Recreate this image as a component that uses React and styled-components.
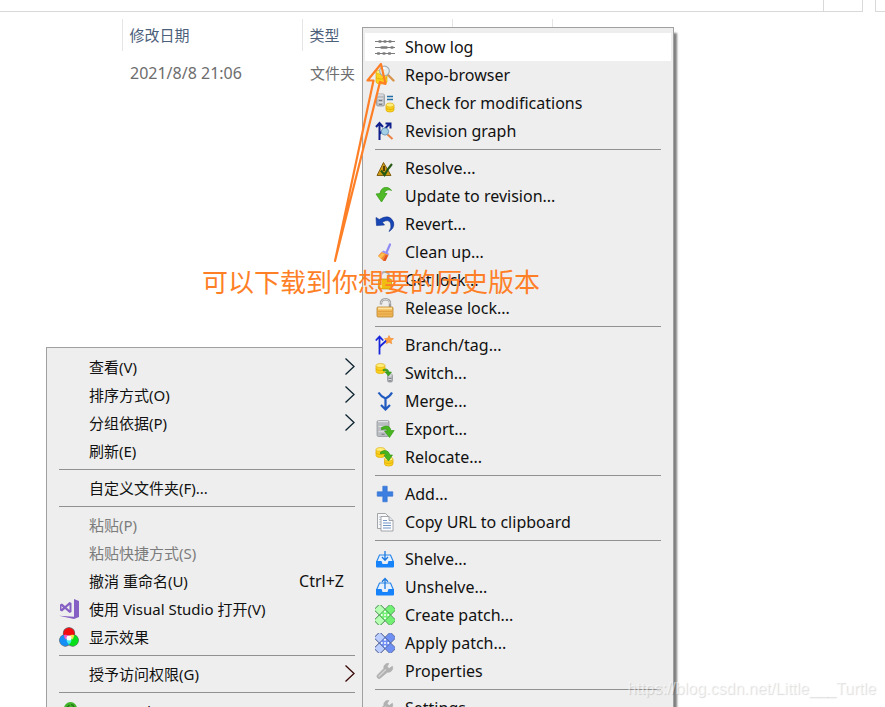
import React from "react";
import styled, { createGlobalStyle } from "styled-components";

const Global = createGlobalStyle`
  * { box-sizing: border-box; }
  body {
    margin: 0;
    background: #fff;
    color: #111;
    font-family: "Noto Sans", "Noto Sans CJK SC", sans-serif;
    font-size: 15px;
  }
`;

const Window = styled.main`
  position: relative;
  height: 100vh;
  overflow: hidden;
`;

const AddressStrip = styled.header`
  display: flex;
  justify-content: flex-end;
  gap: 12px;
  height: 12px;
`;

const AddressBox = styled.div`
  flex: 1;
  display: flex;
  justify-content: flex-end;
  border: solid #d9d9d9;
  border-width: 0 1px 1px 0;
`;

const RefreshBox = styled.div`
  width: 39px;
  border-left: 1px solid #d9d9d9;
`;

const SearchBox = styled.div`
  width: 10px;
  border: solid #d9d9d9;
  border-width: 0 0 1px 1px;
`;

const FileTable = styled.table`
  width: 100%;
  margin-top: 7px;
  border-collapse: collapse;
  table-layout: fixed;
`;

const Col = styled.col`
  width: ${(p) => p.$w};
`;

const HeadCell = styled.th`
  height: 32px;
  padding: 0 0 0 7px;
  border-left: ${(p) => (p.$first ? "0" : "1px solid #e5e5e5")};
  color: #4c607a;
  font-weight: 400;
  line-height: 20px;
  text-align: left;
`;

const Cell = styled.td`
  height: 44px;
  padding: 0 0 0 8px;
  color: #6d6d6d;
  font-size: ${(p) => (p.$latin ? "16px" : "15px")};
  line-height: 20px;
`;

const MenuPanel = styled.div`
  position: absolute;
  left: ${(p) => p.$left}px;
  top: ${(p) => p.$top}px;
  width: ${(p) => p.$width}px;
  padding: 5px 2px;
  border: 1px solid #a0a0a0;
  background: #eee;
  font-size: ${(p) => (p.$latin ? "16px" : "15px")};
  box-shadow: 3px 6px 2px rgba(0, 0, 0, 0.5);
`;

const Item = styled.button`
  display: flex;
  align-items: center;
  gap: 10px;
  width: 100%;
  height: 28px;
  padding: 0 10px;
  border: 0;
  background: ${(p) => (p.$active ? "#fff" : "transparent")};
  color: ${(p) => (p.disabled ? "#7c7c7c" : "#111")};
  font: inherit;
  line-height: 20px;
  text-align: left;
  white-space: nowrap;
`;

const Label = styled.span`
  flex: 1;
`;

const Shortcut = styled.span`
  padding-right: 11px;
  font-size: 16px;
`;

const Separator = styled.hr`
  height: 1px;
  margin: 4px 10px;
  border: 0;
  background: #919191;
`;

const IconBox = styled.svg`
  flex: none;
  width: 20px;
  height: 20px;
`;

const ChevronSvg = styled.svg`
  flex: none;
  width: 10px;
  height: 20px;
`;

const Note = styled.p`
  position: absolute;
  left: 202px;
  top: 263px;
  margin: 0;
  color: #ff7f27;
  font-family: "Noto Sans CJK SC", sans-serif;
  font-size: 26px;
  line-height: 36px;
  white-space: nowrap;
`;

const NoteArrow = styled.svg`
  position: absolute;
  left: 330px;
  top: 60px;
  width: 60px;
  height: 206px;
`;

const Watermark = styled.p`
  position: absolute;
  right: 9px;
  bottom: 8px;
  margin: 0;
  color: rgba(255, 255, 255, 0.55);
  font-family: "Liberation Sans", sans-serif;
  font-size: 16px;
  line-height: 20px;
  text-shadow: 1px 1px 1px rgba(0, 0, 0, 0.14);
`;

const Cylinder = ({ x, y, w = 9, h = 10, body = "#fbd21c", top = "#ffee7a", edge = "#dca90a" }) => (
  <g>
    <path d={`M${x} ${y + 2}v${h - 4}q0 2 ${w / 2} 2t${w / 2}-2v${4 - h}z`} fill={body} stroke={edge} strokeWidth=".7" />
    <path d={`M${x} ${y + h / 2}q0 2 ${w / 2} 2t${w / 2}-2`} fill="none" stroke={edge} strokeWidth=".8" />
    <ellipse cx={x + w / 2} cy={y + 2} rx={w / 2} ry="2" fill={top} stroke={edge} strokeWidth=".6" />
  </g>
);

const Cabinet = ({ x, y, w, h }) => (
  <g>
    <rect x={x} y={y} width={w} height={h} rx="1.5" fill="#b9bcc0" stroke="#92969a" strokeWidth=".8" />
    <path d={`M${x + 1} ${y + 1}h${w - 2}`} stroke="#e0e3e8" strokeWidth="1.4" />
    <path
      d={`M${x + 1.5} ${y + h * 0.38}h${w - 3}M${x + 1.5} ${y + h * 0.7}h${w - 3}`}
      stroke="#dfe0e2"
      strokeWidth="1"
    />
    <path d={`M${x + w / 2 - 1.5} ${y + h * 0.54}h3M${x + w / 2 - 1.5} ${y + h * 0.86}h3`} stroke="#74787c" />
  </g>
);

const Patch = ({ light, dark, edge }) => (
  <g strokeWidth=".8" stroke={edge}>
    <g transform="rotate(-45 10 10)">
      <rect x="-1.500" y="6" width="23" height="8" rx="1" fill={dark} />
      <rect x="-1.500" y="6" width="9" height="8" rx="1" fill={light} />
    </g>
    <g transform="rotate(45 10 10)">
      <rect x="-1.500" y="6" width="23" height="8" rx="1" fill={dark} />
      <rect x="-1.500" y="6" width="8" height="8" rx="1" fill={light} />
      <rect x="6" y="6" width="8" height="8" fill={dark} strokeWidth=".6" />
    </g>
    <g fill="#fff" stroke="none">
      <circle cx="10" cy="6.800" r="1" />
      <circle cx="13.200" cy="10" r="1" />
      <circle cx="10" cy="13.200" r="1" />
      <circle cx="6.800" cy="10" r="1" />
      <circle cx="10" cy="10" r="1" />
    </g>
  </g>
);

const Wrench = () => (
  <g>
    <path
      d="M17.4 5.3 14.2 7.5 12 5.8l1.8-3.3C10.800 1.900 8.300 4.500 8.900 7.500L2.500 14c-1.600 1.800.9 4.700 2.900 3l6.900-5.800c3.600.6 6.300-2.600 5.100-5.900z"
      fill="#b2b2b2"
      stroke="#a5a5a5"
      strokeWidth=".6"
    />
    <path d="m4 15.300 6.500-6.500" stroke="#d2d2d2" strokeWidth="1.400" strokeLinecap="round" />
  </g>
);

const Tray = () => (
  <g>
    <path d="M1.500 13 4.500 6h11l3 7" fill="#e6f1fd" stroke="#2b88ea" strokeWidth="1.200" />
    <path d="M1 12h5.500l1 3h5l1-3H19v5.500q0 1-1 1H2q-1 0-1-1z" fill="#1683fb" />
  </g>
);

const icons = {
  log: (
    <g stroke="#7b7b7b" fill="#7b7b7b">
      <path d="M0 4.500h20M0 10.500h20M0 16.500h20" strokeWidth="1" />
      <path d="M4.500 4.500h1M9.500 4.500h1M14.500 4.500h1M6.500 10.500h5M16.500 10.500h1M3 16.500h1M8.500 16.500h1M14 16.500h1" strokeWidth="2.400" strokeLinecap="round" />
    </g>
  ),
  repo: (
    <g>
      <Cylinder x={1} y={5} w={11} h={14} />
      <path d="m13 10 5.500 5.500" stroke="#d8954d" strokeWidth="2.400" strokeLinecap="round" />
      <circle cx="9.500" cy="6" r="4.800" fill="#e2eff6" fillOpacity=".9" stroke="#a3acb4" strokeWidth="1.200" />
      <path d="M6.500 6q.5-3 3.500-3" stroke="#fff" fill="none" strokeWidth="1.400" />
    </g>
  ),
  check: (
    <g>
      <Cabinet x={1.5} y={1} w={8} h={12} />
      <path d="M12 3.500h6M12 6.500h6" stroke="#216da5" strokeWidth="1.700" />
      <Cylinder x={11} y={10} w={8} h={9} />
    </g>
  ),
  graph: (
    <g fill="none" stroke="#10218d" strokeWidth="2">
      <path d="M4.500 19V2M1 6l3.500-4L8 6M4.500 13l10-10M10.500 2.500h5v5" />
      <path d="m12 13 5.500 5" stroke="#e98245" strokeWidth="2" />
      <circle cx="10" cy="10.500" r="3.600" fill="#a5cfe6" stroke="#6f9cbc" strokeWidth="1" />
    </g>
  ),
  resolve: (
    <g>
      <path d="M8.500 4.500 16 17.500H2z" fill="#d09a12" stroke="#806016" strokeLinejoin="round" />
      <path d="M9 8v5M9 14.500v1.500" stroke="#3a2b08" strokeWidth="1.600" />
      <path d="m6 12.500 3.500 4.500q3-6 7.500-11" fill="none" stroke="#275b15" strokeWidth="2.200" />
    </g>
  ),
  update: (
    <path
      d="M16.500 4.500C14 0 6 0 5 7.500L1 8l5.500 8 5.500-8.500H9.500c.4-3.300 4.500-4.500 7-3z"
      fill="#4fb928"
      stroke="#3b9e1c"
      strokeWidth=".8"
      strokeLinejoin="round"
    />
  ),
  revert: (
    <path
      d="M1 3.500 1.500 11.500 9.500 11 7.300 8.300q6-3.800 8.200.7 1.500 4.500-1.500 8.500Q20 14 18.500 8 14.500-.8 4.300 5.400z"
      fill="#1645b5"
      stroke="#0c2e8d"
      strokeWidth=".6"
    />
  ),
  clean: (
    <g>
      <path d="m15 2.500-3.500 8" stroke="#8f8bf5" strokeWidth="2.200" strokeLinecap="round" />
      <path d="m8.500 8.500 5 2.500.5 2.500-7.500-3.500z" fill="#9a92f5" />
      <path d="M6.500 10 3 14l5.500 5h2l3-6z" fill="#f58b36" />
      <path d="m7 11-3.500 3.500 2.500 2L10 12z" fill="#fbc04d" />
      <path d="m8 18.500 3-5.500 2 .5-2.500 5.500z" fill="#e05428" />
    </g>
  ),
  lock: (
    <g>
      <path d="M6 11V6q0-4 4-4t4 4v5" fill="none" stroke="#b1b1b1" strokeWidth="2" />
      <rect x="3.500" y="9" width="13" height="10" rx="1" fill="#f0bd12" stroke="#c99206" strokeWidth=".7" />
      <path d="M6 10v8" stroke="#ffe16a" strokeWidth="2" />
    </g>
  ),
  unlock: (
    <g>
      <path d="M6 6.500Q5.500 1.300 10.500 1.300t4.500 5V10" fill="none" stroke="#9c9c9c" strokeWidth="2.400" />
      <path d="M6 5.500q.5-4.200 4.500-4.200 4 0 4.500 4.500" fill="none" stroke="#dcdcdc" strokeWidth="1" />
      <rect x="2" y="9" width="16" height="10" rx="1" fill="#f0b656" stroke="#b9832d" strokeWidth=".8" />
      <path d="M3 10.500h14" stroke="#ffe3a0" strokeWidth="1.800" />
      <path d="M3 13.500h14M3 16h14" stroke="#dc9c3c" strokeWidth=".8" />
    </g>
  ),
  branch: (
    <g fill="none" stroke="#1826dc" strokeWidth="1.800">
      <path d="M4.500 19.500V2M.8 5.500 4.500 1.500l3.700 4M4.500 13.500q0-2 2-3.500l5-4.500" />
      <path d="m14 .5 1.300 2.800 3.200.3-2.400 2.100.7 3.100L14 7.300l-2.800 1.500.7-3.100-2.400-2.100 3.200-.3z" fill="#ffa143" stroke="#f08a2a" strokeWidth=".6" />
    </g>
  ),
  switch: (
    <g>
      <Cylinder x={1} y={0.5} w={9} h={10} />
      <Cabinet x={12.5} y={11} w={5} h={8} />
      <path d="M8 6.500q5-2 6 2.500h2.500L13.500 13l-3.500-4h2q-1-1.800-4-1z" fill="#3ca621" stroke="#2c8a16" strokeWidth=".5" />
    </g>
  ),
  merge: (
    <path d="M3.500 1.500Q6 5.500 10.500 7.500 15 5.500 17 1.500M10.500 7v11M6 14l4.500 4.500L15 14" fill="none" stroke="#215bc0" strokeWidth="2.200" />
  ),
  export: (
    <g>
      <Cabinet x={2} y={1.5} w={12} h={16} />
      <path d="M6.500 8.500q8-4 9.500 3h3.200l-4.700 7-5-6.500h3q-1-3-6-1.500z" fill="#46b51f" stroke="#319713" strokeWidth=".6" />
    </g>
  ),
  relocate: (
    <g>
      <Cylinder x={1} y={0.5} w={9} h={10} />
      <Cylinder x={9.5} y={10} w={8.5} h={9} />
      <path d="M5.500 5q7-4 9.500 3h2.500L13.500 14 9 8.500h2.300Q9.500 5.500 5.500 7z" fill="#46b51f" stroke="#2f8d14" strokeWidth=".6" />
    </g>
  ),
  add: <path d="M7.800 2.200h4.400v5.600h5.600v4.400h-5.600v5.600H7.800v-5.600H2.200V7.800h5.600z" fill="#3d7fe0" stroke="#2c6bd0" strokeWidth=".6" />,
  copy: (
    <g stroke="#8f9297" strokeWidth=".8">
      <path d="M2.500 1.500h8l3 3v12h-11z" fill="#f7f8fa" />
      <path d="M4 5h3M4 7.500h3M4 10h3M4 12.500h3" stroke="#a9b6c8" />
      <path d="M6 4.500h8l4 4v10.500H6z" fill="#fcfdff" />
      <path d="M14 4.500v4h4" fill="#e1e4e9" />
      <path d="M8 8.500h4M8 11h8M8 13.500h8M8 16h8" stroke="#7396c6" strokeWidth="1.200" />
    </g>
  ),
  shelve: (
    <g>
      <Tray />
      <path d="M10 2v9M7 8l3 3.200L13 8" fill="none" stroke="#1b79e0" strokeWidth="1.300" />
    </g>
  ),
  unshelve: (
    <g>
      <Tray />
      <path d="M10 12V1.500M7 4.700l3-3.200 3 3.200" fill="none" stroke="#1b79e0" strokeWidth="1.300" />
    </g>
  ),
  createPatch: <Patch light="#b7ffb5" dark="#72f074" edge="#4d8d55" />,
  applyPatch: <Patch light="#bccdff" dark="#6f90f2" edge="#54628f" />,
  wrench: <Wrench />,
  vs: (
    <g fill="#865fc5">
      <path d="M15 0 20 2v16l-5 2L0 16.800l15 1z" />
      <path d="m1 5.500 2-1 3 2.500 4.500-4 2 1v9l-2 1-4.500-4-3 2.500-2-1zM2.500 7v3L4 8.500zM10.500 6 7.500 8.500l3 2.500z" fillRule="evenodd" />
    </g>
  ),
  rgb: (
    <g>
      <path d="M10 0a6.300 6.300 0 0 1 6 7.500A6.300 6.300 0 1 1 10 18.500 6.300 6.300 0 1 1 4 7.500 6.300 6.300 0 0 1 10 0z" fill="#6c7175" />
      <circle cx="10" cy="6.400" r="5.600" fill="#f30b12" />
      <circle cx="6.200" cy="13.300" r="5.600" fill="#158ff5" />
      <circle cx="13.800" cy="13.300" r="5.600" fill="#08df1b" />
      <path d="M4.800 8.200q2.300-1.300 5.200 1-2.500 1-3 3.500-2-2-2.200-4.500z" fill="#f558c8" />
      <path d="M15.200 8.200q-2.300-1.300-5.200 1 2.500 1 3 3.500 2-2 2.200-4.500z" fill="#f6e647" />
      <path d="M10 17.500q-2.800-2-2.500-5h5q.3 3-2.500 5z" fill="#48e9ee" />
      <circle cx="10" cy="10.900" r="2.500" fill="#fff" />
    </g>
  ),
  svn: (
    <g>
      <circle cx="11.500" cy="7.500" r="6.500" fill="#42b52a" />
      <path d="M12 3.500q3.500.5 3 5M7.500 7l3-3" fill="none" stroke="#257a18" strokeWidth="1.600" />
    </g>
  ),
};

const Icon = ({ name }) => (
  <IconBox viewBox="0 0 20 20" aria-hidden="true">
    {icons[name]}
  </IconBox>
);

const Chevron = ({ color }) => (
  <ChevronSvg viewBox="0 0 10 20" aria-hidden="true">
    <path d="m.5 1.500 8.500 8-8.500 8" fill="none" stroke={color} strokeWidth="1.300" />
  </ChevronSvg>
);

const folderMenu = [
  [
    { label: "查看(V)", sub: "#0d2430" },
    { label: "排序方式(O)", sub: "#0d2430" },
    { label: "分组依据(P)", sub: "#0d2430" },
    { label: "刷新(E)" },
  ],
  [{ label: "自定义文件夹(F)..." }],
  [
    { label: "粘贴(P)", disabled: true },
    { label: "粘贴快捷方式(S)", disabled: true },
    { label: "撤消 重命名(U)", shortcut: "Ctrl+Z" },
    { label: "使用 Visual Studio 打开(V)", icon: "vs" },
    { label: "显示效果", icon: "rgb" },
  ],
  [{ label: "授予访问权限(G)", sub: "#3a0a08" }],
  [{ label: "SVN Update", icon: "svn" }],
];

const svnMenu = [
  [
    { label: "Show log", icon: "log", active: true },
    { label: "Repo-browser", icon: "repo" },
    { label: "Check for modifications", icon: "check" },
    { label: "Revision graph", icon: "graph" },
  ],
  [
    { label: "Resolve...", icon: "resolve" },
    { label: "Update to revision...", icon: "update" },
    { label: "Revert...", icon: "revert" },
    { label: "Clean up...", icon: "clean" },
    { label: "Get lock...", icon: "lock" },
    { label: "Release lock...", icon: "unlock" },
  ],
  [
    { label: "Branch/tag...", icon: "branch" },
    { label: "Switch...", icon: "switch" },
    { label: "Merge...", icon: "merge" },
    { label: "Export...", icon: "export" },
    { label: "Relocate...", icon: "relocate" },
  ],
  [
    { label: "Add...", icon: "add" },
    { label: "Copy URL to clipboard", icon: "copy" },
  ],
  [
    { label: "Shelve...", icon: "shelve" },
    { label: "Unshelve...", icon: "unshelve" },
    { label: "Create patch...", icon: "createPatch" },
    { label: "Apply patch...", icon: "applyPatch" },
    { label: "Properties", icon: "wrench" },
  ],
  [{ label: "Settings", icon: "wrench" }],
];

const Menu = ({ groups, left, top, width, name, latin }) => (
  <MenuPanel role="menu" aria-label={name} $left={left} $top={top} $width={width} $latin={latin}>
    {groups.map((group, i) => (
      <React.Fragment key={i}>
        {i > 0 && <Separator />}
        {group.map((item) => (
          <Item key={item.label} type="button" role="menuitem" disabled={item.disabled} $active={item.active}>
            <Icon name={item.icon} />
            <Label>{item.label}</Label>
            {item.shortcut && <Shortcut>{item.shortcut}</Shortcut>}
            {item.sub && <Chevron color={item.sub} />}
          </Item>
        ))}
      </React.Fragment>
    ))}
  </MenuPanel>
);

export default function App() {
  return (
    <Window>
      <Global />
      <AddressStrip>
        <AddressBox>
          <RefreshBox />
        </AddressBox>
        <SearchBox />
      </AddressStrip>
      <FileTable>
        <colgroup>
          <Col $w="122px" />
          <Col $w="180px" />
          <Col $w="150px" />
          <Col $w="100px" />
          <Col $w="auto" />
        </colgroup>
        <thead>
          <tr>
            <HeadCell $first />
            <HeadCell>修改日期</HeadCell>
            <HeadCell>类型</HeadCell>
            <HeadCell />
            <HeadCell />
          </tr>
        </thead>
        <tbody>
          <tr>
            <Cell />
            <Cell $latin>2021/8/8 21:06</Cell>
            <Cell>文件夹</Cell>
            <Cell />
            <Cell />
          </tr>
        </tbody>
      </FileTable>
      <Menu name="Folder" groups={folderMenu} left={46} top={347} width={322} />
      <Menu name="SVN" groups={svnMenu} left={362} top={27} width={312} latin />
      <NoteArrow viewBox="0 0 60 206" aria-hidden="true">
        <path
          d="M5 201 43.500 20.500 37.500 20.500 51 4l4.500 20-5.500-2z"
          fill="none"
          stroke="#ff7f27"
          strokeWidth="2.200"
          strokeLinejoin="round"
        />
      </NoteArrow>
      <Note>可以下载到你想要的历史版本</Note>
      <Watermark>https://blog.csdn.net/Little___Turtle</Watermark>
    </Window>
  );
}
